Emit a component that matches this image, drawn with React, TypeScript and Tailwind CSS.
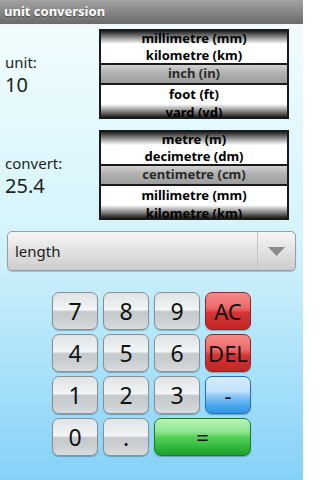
import React from "react";

type PickerProps = {
  items: string[];
};

const rowHeights = ["h-[14px]", "h-[18px] pt-[3px]", "h-[22px]", "h-[18px]", "h-[18px]"];

// old android wheel picker: 5 visible items, middle one selected
function WheelPicker({ items }: PickerProps) {
  return (
    <div className="relative w-[190px] h-[90px] border-2 border-[#1a1a1a] bg-white overflow-hidden">
      {/* wheel shading top and bottom, drawn under the labels */}
      <div className="absolute inset-x-0 top-0 h-[13px] bg-[linear-gradient(to_bottom,#1e1e1e_0%,#707070_35%,rgba(255,255,255,0)_100%)]" />
      <div className="absolute inset-x-0 bottom-0 h-[13px] bg-[linear-gradient(to_top,#1e1e1e_0%,#707070_35%,rgba(255,255,255,0)_100%)]" />
      <div className="relative flex flex-col">
        {items.map((item, i) =>
          i === 2 ? (
            <div
              key={item}
              className={`${rowHeights[i]} shrink-0 flex items-center justify-center border-y-2 border-[#1a1a1a] bg-[linear-gradient(to_bottom,#d2d2d2_0%,#b3b3b3_40%,#9c9c9c_100%)] text-[#2a2a2a]`}
            >
              {item}
            </div>
          ) : (
            <div
              key={item}
              className={`${rowHeights[i]} shrink-0 flex items-center justify-center text-black leading-none`}
            >
              {item}
            </div>
          )
        )}
      </div>
    </div>
  );
}

type KeyProps = {
  label: string;
  tone?: "gray" | "red" | "blue" | "green";
  wide?: boolean;
};

function Key({ label, tone = "gray", wide = false }: KeyProps) {
  const tones = {
    gray: "border-[#8a8f93] bg-[linear-gradient(to_bottom,#dfe3e5_0%,#eef1f2_38%,#f4f6f7_46%,#c4c9cc_52%,#cdd1d4_80%,#dadddf_100%)]",
    red: "border-[#8a2a2a] bg-[linear-gradient(to_bottom,#f58a8a_0%,#ee6a6a_40%,#e55454_48%,#d23636_55%,#c42424_100%)]",
    blue: "border-[#2a6fb0] bg-[linear-gradient(to_bottom,#d6ecfc_0%,#bfe0fb_40%,#8ec8f6_52%,#4aa6ee_80%,#2f94e8_100%)]",
    green: "border-[#1d7a2a] bg-[linear-gradient(to_bottom,#b8f2b8_0%,#8fe58f_35%,#52cf55_52%,#2fb63a_80%,#1f9d2c_100%)]",
  };
  return (
    <button
      className={`h-[38px] ${wide ? "col-span-2" : ""} rounded-[7px] border ${tones[tone]} shadow-[0_1px_1px_rgba(0,0,0,0.25)] flex items-center justify-center leading-none text-[#111] ${
        tone === "gray" ? "text-[23px]" : "text-[22px]"
      }`}
    >
      {label}
    </button>
  );
}

export default function App() {
  return (
    <div className="w-[303px] h-[480px] flex flex-col overflow-hidden bg-linear-to-b from-[#f4fdfe] via-[#d3f4fb] to-[#84d1f8] font-['Noto_Sans',sans-serif]">
      {/* title bar */}
      <div className="h-[24px] shrink-0 flex items-center px-[4px] bg-linear-to-b from-[#a3a3a3] to-[#6b6b6b] text-white text-[13px] font-bold [text-shadow:0_1px_1px_rgba(0,0,0,0.4)]">
        unit conversion
      </div>
      <div className="h-[2px] shrink-0 bg-[#f4f6f6]" />

      <div className="flex flex-col pt-[3px]">
        <div className="flex items-center">
          <div className="w-[99px] pl-[5px] flex flex-col text-[#1e1e1e]">
            <span className="text-[15px] leading-[22px]">unit:</span>
            <span className="text-[20px] leading-[24px]">10</span>
          </div>
          <div className="text-[13px] font-bold">
            <WheelPicker
              items={["millimetre (mm)", "kilometre (km)", "inch (in)", "foot (ft)", "yard (yd)"]}
            />
          </div>
        </div>

        <div className="flex items-center mt-[11px]">
          <div className="w-[99px] pl-[5px] flex flex-col text-[#1e1e1e]">
            <span className="text-[15px] leading-[22px]">convert:</span>
            <span className="text-[20px] leading-[24px]">25.4</span>
          </div>
          <div className="text-[13px] font-bold">
            <WheelPicker
              items={["metre (m)", "decimetre (dm)", "centimetre (cm)", "millimetre (mm)", "kilometre (km)"]}
            />
          </div>
        </div>

        {/* spinner */}
        <div className="mx-[7px] mt-[11px] h-[40px] flex rounded-[5px] border border-[#9a9ea0] bg-linear-to-b from-[#f6f6f6] to-[#cdcdcd] shadow-[0_1px_1px_rgba(0,0,0,0.2)]">
          <div className="flex-1 flex items-center pl-[7px] text-[15px] text-[#1a1a1a]">length</div>
          <div className="w-[38px] border-l border-[#c4c4c4] flex items-center justify-center">
            <svg width="17" height="9" viewBox="0 0 17 9">
              <path d="M0 0 H17 L8.5 9 Z" fill="#8c8c8c" />
            </svg>
          </div>
        </div>

        {/* keypad */}
        <div className="mt-[21px] ml-[52px] w-[199px] grid grid-cols-4 gap-x-[5px] gap-y-[4px]">
          <Key label="7" />
          <Key label="8" />
          <Key label="9" />
          <Key label="AC" tone="red" />
          <Key label="4" />
          <Key label="5" />
          <Key label="6" />
          <Key label="DEL" tone="red" />
          <Key label="1" />
          <Key label="2" />
          <Key label="3" />
          <Key label="-" tone="blue" />
          <Key label="0" />
          <Key label="." />
          <Key label="=" tone="green" wide />
        </div>
      </div>
    </div>
  );
}
